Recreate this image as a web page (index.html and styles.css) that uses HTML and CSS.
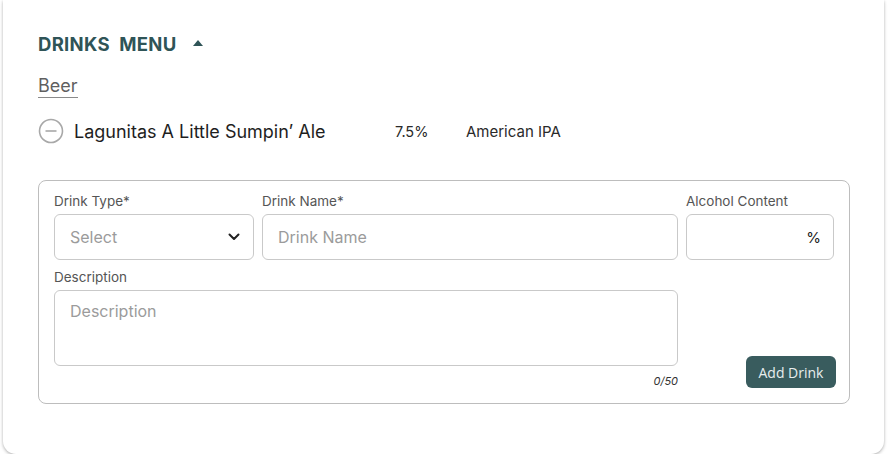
FILE: index.html
```html
<!DOCTYPE html>
<html>
<head>
<meta charset="utf-8">
<link rel="stylesheet" href="styles.css">
</head>
<body>
<div class="card">
  <div class="heading">
    <span class="title">DRINKS&nbsp; MENU</span>
    <svg class="caret" width="10" height="6" viewBox="0 0 10 6"><path d="M0 6 L5 0 L10 6 Z" fill="#2f5457"/></svg>
  </div>
  <div class="category">Beer</div>
  <div class="drink-row">
    <svg class="minus" width="26" height="26" viewBox="0 0 26 26"><circle cx="13" cy="13" r="11.5" fill="none" stroke="#a8a8a8" stroke-width="1.6"/><line x1="7.5" y1="13" x2="18.5" y2="13" stroke="#a8a8a8" stroke-width="1.6"/></svg>
    <span class="drink-name">Lagunitas A Little Sumpin’ Ale</span>
    <span class="drink-abv">7.5%</span>
    <span class="drink-style">American IPA</span>
  </div>
  <div class="form">
    <div class="field">
      <label class="label">Drink Type*</label>
      <div class="input select"><span class="ph">Select</span>
        <svg width="12" height="8" viewBox="0 0 12 8"><path d="M1.5 1.5 L6 6 L10.5 1.5" fill="none" stroke="#222" stroke-width="2" stroke-linecap="round" stroke-linejoin="round"/></svg>
      </div>
    </div>
    <div class="field">
      <label class="label">Drink Name*</label>
      <div class="input"><span class="ph">Drink Name</span></div>
    </div>
    <div class="field">
      <label class="label">Alcohol Content</label>
      <div class="input pct"><span class="pct-sign">%</span></div>
    </div>
    <div class="field desc">
      <label class="label">Description</label>
      <div class="input textarea"><span class="ph">Description</span></div>
      <div class="counter">0/50</div>
    </div>
    <div class="actions">
      <button class="btn">Add Drink</button>
    </div>
  </div>
</div>
</body>
</html>
```
FILE: styles.css
```css
html, body { margin: 0; padding: 0; background: #ffffff; }
body { font-family: Inter, "Noto Sans", sans-serif; }
.card {
  margin: 0 4px 0 3px;
  height: 422px;
  background: #fff;
  border-radius: 0 0 13px 13px;
  box-shadow: 0 1px 3px rgba(0,0,0,0.25), 0 2px 4px rgba(0,0,0,0.08);
  padding: 32px 34px 0 35px;
  box-sizing: content-box;
}
.heading { display: flex; align-items: center; height: 24px; }
.title { font-size: 18.5px; font-weight: 700; color: #2f5457; letter-spacing: 0.3px; }
.caret { margin-left: 16px; margin-top: -2px; }
.category {
  display: inline-block;
  margin-top: 19px;
  font-size: 18px;
  color: #5f5f5f;
  line-height: 22px;
  border-bottom: 1.5px solid #8a8a8a;
  padding-bottom: 0;
}
.drink-row { display: flex; align-items: center; margin-top: 20px; height: 26px; }
.minus { margin-left: 0; }
.drink-name { margin-left: 10px; font-size: 18px; color: #1e1e1e; font-weight: 400; width: 321px; }
.drink-abv { font-size: 14.5px; color: #2a2a2a; width: 71px; }
.drink-style { font-size: 15px; color: #2a2a2a; }
.form {
  margin-top: 36px;
  border: 1px solid #bdbdbd;
  border-radius: 8px;
  padding: 12px 15px 15px 15px;
  display: grid;
  grid-template-columns: 200px 416px 148px;
  column-gap: 8px;
  row-gap: 9px;
  width: 780px;
}
.field { display: flex; flex-direction: column; }
.label { font-size: 13.5px; color: #555; height: 21px; line-height: 16px; }
.input {
  box-sizing: border-box;
  height: 46px;
  border: 1px solid #c9c9c9;
  border-radius: 6px;
  display: flex;
  align-items: center;
  padding: 0 15px;
}
.ph { font-size: 16px; color: #9b9b9b; }
.select { justify-content: space-between; padding-right: 13px; }
.pct { justify-content: flex-end; padding-right: 12px; }
.pct-sign { font-size: 15px; color: #222; }
.desc { grid-column: 1 / 3; }
.textarea { height: 76px; align-items: flex-start; padding-top: 10px; }
.counter { align-self: flex-end; font-size: 11px; font-style: italic; color: #333; margin-top: 8px; }
.actions { display: flex; align-items: flex-end; justify-content: flex-end; margin-right: -2px; }
.btn {
  font-family: "Open Sans", sans-serif;
  background: #395c5e;
  color: #e8eeee;
  border: none;
  border-radius: 6px;
  width: 90px;
  height: 32px;
  font-size: 14px;
}
```
